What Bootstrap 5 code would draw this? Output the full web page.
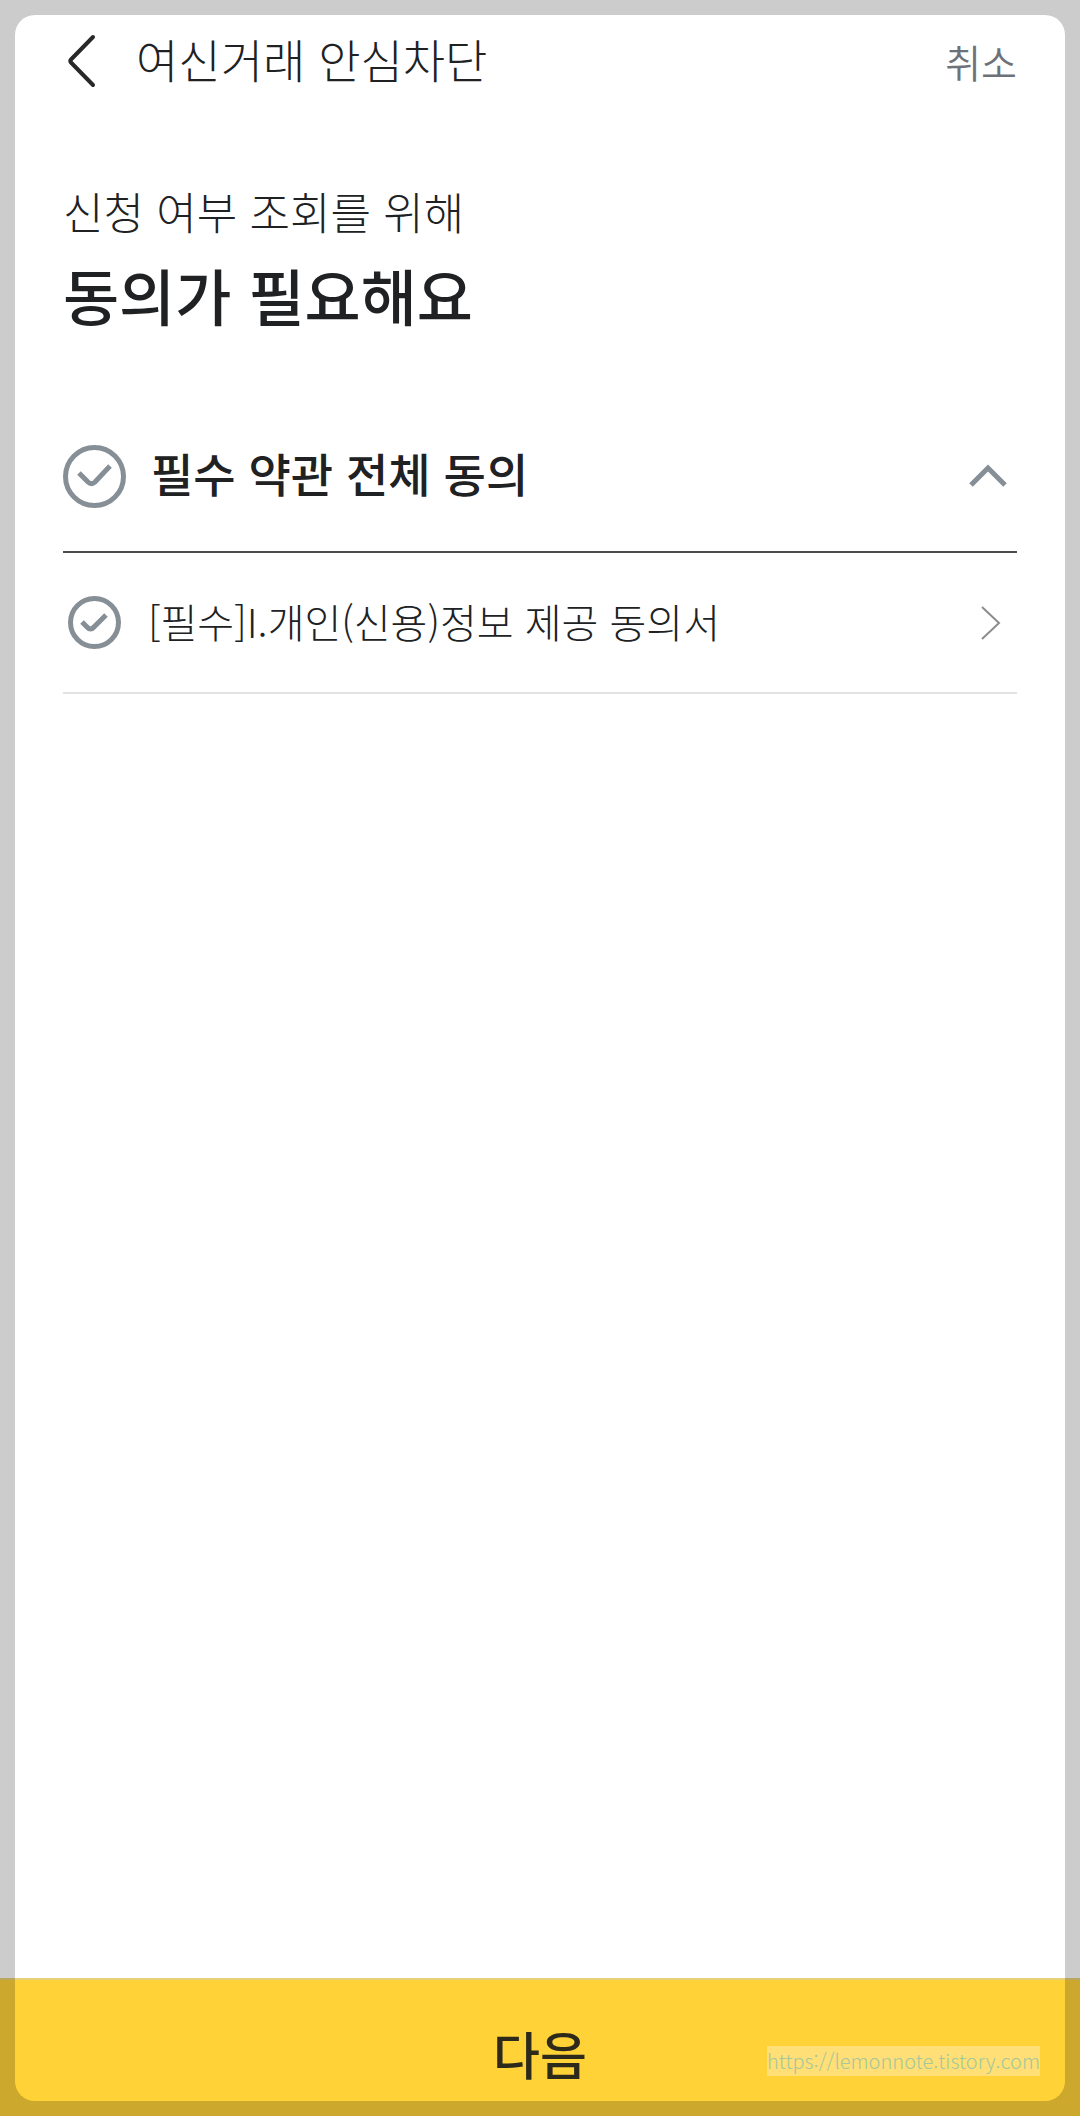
<!DOCTYPE html>
<html lang="ko">
<head>
<meta charset="utf-8">
<meta name="viewport" content="width=device-width, initial-scale=1">
<title>여신거래 안심차단</title>
<link href="https://cdn.jsdelivr.net/npm/bootstrap@5.3.0/dist/css/bootstrap.min.css" rel="stylesheet">
<style>
  body { font-family: "Noto Sans CJK KR", sans-serif; font-weight: 300; color: #202123; background: #fff; }
  /* translucent rounded frame over the whole screen */
  .screen-frame { position: fixed; inset: 15px; border-radius: 20px; box-shadow: 0 0 0 40px rgba(0, 0, 0, .2); pointer-events: none; z-index: 10; }
  .gutter { padding-left: 63px; padding-right: 63px; }
  .topbar { padding-top: 28px; }
  .topbar h1 { font-size: 46px; line-height: 60px; font-weight: 300; padding-bottom: 6px; }
  .back-btn { padding: 0 40px 0 4px; line-height: 0; }
  .cancel-btn { font-size: 39px; line-height: 60px; color: #6d7278; font-weight: 350; }
  .intro { padding-top: 83px; }
  .intro-sub { font-size: 44px; line-height: 68px; }
  .intro-title { font-size: 61px; line-height: 100px; font-weight: 500; }
  .terms { padding-top: 56px; }
  .agree-all { height: 152px; border-bottom: 2px solid #4b4b4d; }
  .agree-all label { font-size: 46px; line-height: 68px; font-weight: 500; padding: 0 0 8px 25px; }
  .agree-item { height: 141px; border-bottom: 2px solid #e2e2e2; }
  .agree-item label { font-size: 40px; line-height: 60px; padding: 0 0 4px 22px; }
  .tick { appearance: none; flex: none; margin: 0; border: 0; width: 63px; height: 63px; background: url("data:image/svg+xml,%3Csvg xmlns='http://www.w3.org/2000/svg' viewBox='0 0 63 63' fill='none' stroke='%23868e96' stroke-width='5'%3E%3Ccircle cx='31.5' cy='31.5' r='29'/%3E%3Cpath d='M16 28L25 37Q28.500 40.500 32 37L47 21'/%3E%3C/svg%3E") center/contain no-repeat; }
  .tick-sm { width: 53px; height: 53px; margin: 0 5px; background-image: url("data:image/svg+xml,%3Csvg xmlns='http://www.w3.org/2000/svg' viewBox='0 0 53 53' fill='none' stroke='%23868e96' stroke-width='5'%3E%3Ccircle cx='26.5' cy='26.5' r='24'/%3E%3Cpath d='M14 26L19 31Q22.500 35 26 31L38 19'/%3E%3C/svg%3E"); }
  .tick:checked { filter: brightness(.5); }
  .next-btn { height: 138px; padding-top: 16px; border: 0; border-top: 2px solid #e6d07a; background: #ffd237; color: #2d2a1c; font-size: 51px; line-height: 72px; font-weight: 500; }
  .source-link { position: absolute; right: 40px; bottom: 40px; font-size: 20px; line-height: 30px; font-weight: 300; color: #a4c79c; background: #ffdf76; text-decoration: none; }
</style>
</head>
<body class="d-flex flex-column min-vh-100">
<div class="screen-frame"></div>

<header class="topbar gutter d-flex align-items-center">
  <button type="button" class="btn border-0 back-btn" aria-label="뒤로">
    <svg width="29" height="54" viewBox="0 0 29 54" fill="none" stroke="#27282a" stroke-width="4" stroke-linecap="round" stroke-linejoin="round"><path d="M26 3L4 25.500Q2.500 27 4 28.500L26 51"/></svg>
  </button>
  <h1 class="m-0">여신거래 안심차단</h1>
  <button type="button" class="btn border-0 p-0 ms-auto cancel-btn">취소</button>
</header>

<main class="gutter flex-grow-1">
  <section class="intro">
    <p class="intro-sub m-0">신청 여부 조회를 위해</p>
    <h2 class="intro-title m-0">동의가 필요해요</h2>
  </section>
  <section class="terms">
    <div class="agree-all d-flex align-items-center">
      <input class="tick" type="checkbox" id="agreeAll">
      <label for="agreeAll">필수 약관 전체 동의</label>
      <button type="button" class="btn border-0 p-0 pe-2 ms-auto lh-1" data-bs-toggle="collapse" data-bs-target="#termsList" aria-expanded="true" aria-controls="termsList" aria-label="약관 접기">
        <svg class="d-block" width="42" height="26" viewBox="0 0 42 26" fill="none" stroke="#868e96" stroke-width="5"><path d="M4 22L21 5L38 22"/></svg>
      </button>
    </div>
    <div class="collapse show" id="termsList">
      <div class="agree-item d-flex align-items-center">
        <input class="tick tick-sm" type="checkbox" id="agreeInfo">
        <label for="agreeInfo">[필수]I.개인(신용)정보 제공 동의서</label>
        <a href="#" class="ms-auto pe-3" aria-label="약관 보기">
          <svg class="d-block" width="20" height="36" viewBox="0 0 20 36" fill="none" stroke="#8c8c8c" stroke-width="2"><path d="M1 2L18 18L1 34"/></svg>
        </a>
      </div>
    </div>
  </section>
</main>

<footer class="position-relative">
  <button type="button" class="btn rounded-0 w-100 next-btn">다음</button>
  <a href="https://lemonnote.tistory.com" class="source-link">https://lemonnote.tistory.com</a>
</footer>
<script src="https://cdn.jsdelivr.net/npm/bootstrap@5.3.0/dist/js/bootstrap.bundle.min.js"></script>
</body>
</html>
